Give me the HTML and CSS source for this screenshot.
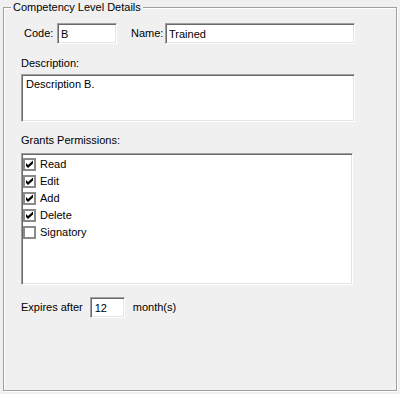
FILE: index.html
```html
<!DOCTYPE html>
<html>
<head>
<meta charset="utf-8">
<link rel="stylesheet" href="styles.css">
</head>
<body>
<div class="group">
  <div class="legend">Competency Level Details</div>
  <div class="row top-row">
    <span class="lbl code-lbl">Code:</span>
    <div class="field code-field">B</div>
    <span class="lbl name-lbl">Name:</span>
    <div class="field name-field">Trained</div>
  </div>
  <div class="lbl desc-lbl">Description:</div>
  <div class="field area">Description B.</div>
  <div class="lbl perm-lbl">Grants Permissions:</div>
  <div class="field list">
    <div class="item"><span class="cb on"><svg width="13" height="13" viewBox="0 0 13 13"><rect x="1" y="1" width="11" height="11" fill="#fff" stroke="#8a8a8a" stroke-width="2"/><path d="M3 5 L5 7 L10 2.5 L10 5.5 L5 10 L3 8 Z" fill="#000"/></svg></span>Read</div>
    <div class="item"><span class="cb on"><svg width="13" height="13" viewBox="0 0 13 13"><rect x="1" y="1" width="11" height="11" fill="#fff" stroke="#8a8a8a" stroke-width="2"/><path d="M3 5 L5 7 L10 2.5 L10 5.5 L5 10 L3 8 Z" fill="#000"/></svg></span>Edit</div>
    <div class="item"><span class="cb on"><svg width="13" height="13" viewBox="0 0 13 13"><rect x="1" y="1" width="11" height="11" fill="#fff" stroke="#8a8a8a" stroke-width="2"/><path d="M3 5 L5 7 L10 2.5 L10 5.5 L5 10 L3 8 Z" fill="#000"/></svg></span>Add</div>
    <div class="item"><span class="cb on"><svg width="13" height="13" viewBox="0 0 13 13"><rect x="1" y="1" width="11" height="11" fill="#fff" stroke="#8a8a8a" stroke-width="2"/><path d="M3 5 L5 7 L10 2.5 L10 5.5 L5 10 L3 8 Z" fill="#000"/></svg></span>Delete</div>
    <div class="item"><span class="cb"><svg width="13" height="13" viewBox="0 0 13 13"><rect x="1" y="1" width="11" height="11" fill="#fff" stroke="#8a8a8a" stroke-width="2"/></svg></span>Signatory</div>
  </div>
  <div class="row exp-row">
    <span class="lbl">Expires after</span>
    <div class="field exp-field">12</div>
    <span class="lbl">month(s)</span>
  </div>
</div>
</body>
</html>
```
FILE: styles.css
```css
html, body {
  margin: 0;
  padding: 0;
  background: #f0f0f0;
}
body {
  font-family: "Liberation Sans", Arial, sans-serif;
  font-size: 11px;
  line-height: 13px;
  color: #000;
  width: 400px;
  height: 394px;
  overflow: hidden;
}
.group {
  position: relative;
  box-sizing: border-box;
  margin: 7px 0 0 3px;
  width: 394px;
  height: 384px;
  border: 1px solid #a0a0a0;
  box-shadow: inset 1px 1px 0 #fff, 1px 1px 0 #fff;
  padding: 15px 0 0 17px;
}
.legend {
  position: absolute;
  left: 7px;
  top: -7px;
  padding: 0 2px;
  background: #f0f0f0;
  line-height: 13px;
}
.row {
  display: flex;
  align-items: center;
}
.top-row {
  height: 21px;
}
.field {
  box-sizing: border-box;
  background: #fff;
  border: 1px solid;
  border-color: #a0a0a0 #fff #fff #a0a0a0;
  box-shadow: inset 1px 1px 0 #696969, inset -1px -1px 0 #e3e3e3;
  white-space: nowrap;
}
.row .field {
  height: 21px;
  padding: 4px 0 0 3px;
}
.code-lbl {
  margin-left: 3px;
  width: 33px;
}
.code-field {
  width: 60px;
}
.name-lbl {
  margin-left: 14px;
  width: 34px;
}
.name-field {
  width: 190px;
}
.desc-lbl {
  margin-top: 13px;
}
.area {
  margin-top: 4px;
  width: 334px;
  height: 48px;
  padding: 3px 0 0 4px;
}
.perm-lbl {
  margin-top: 12px;
}
.list {
  margin-top: 6px;
  width: 332px;
  height: 132px;
  padding: 2px 0 0 1px;
}
.item {
  display: flex;
  align-items: center;
  height: 17px;
}
.cb {
  display: block;
  width: 13px;
  height: 13px;
  margin-right: 4px;
}
.cb svg {
  display: block;
}
.exp-row {
  margin-top: 12px;
  height: 21px;
}
.exp-field {
  width: 35px;
  margin: 0 8px 0 7px;
}
.row .exp-field {
  padding-left: 4px;
}
```
